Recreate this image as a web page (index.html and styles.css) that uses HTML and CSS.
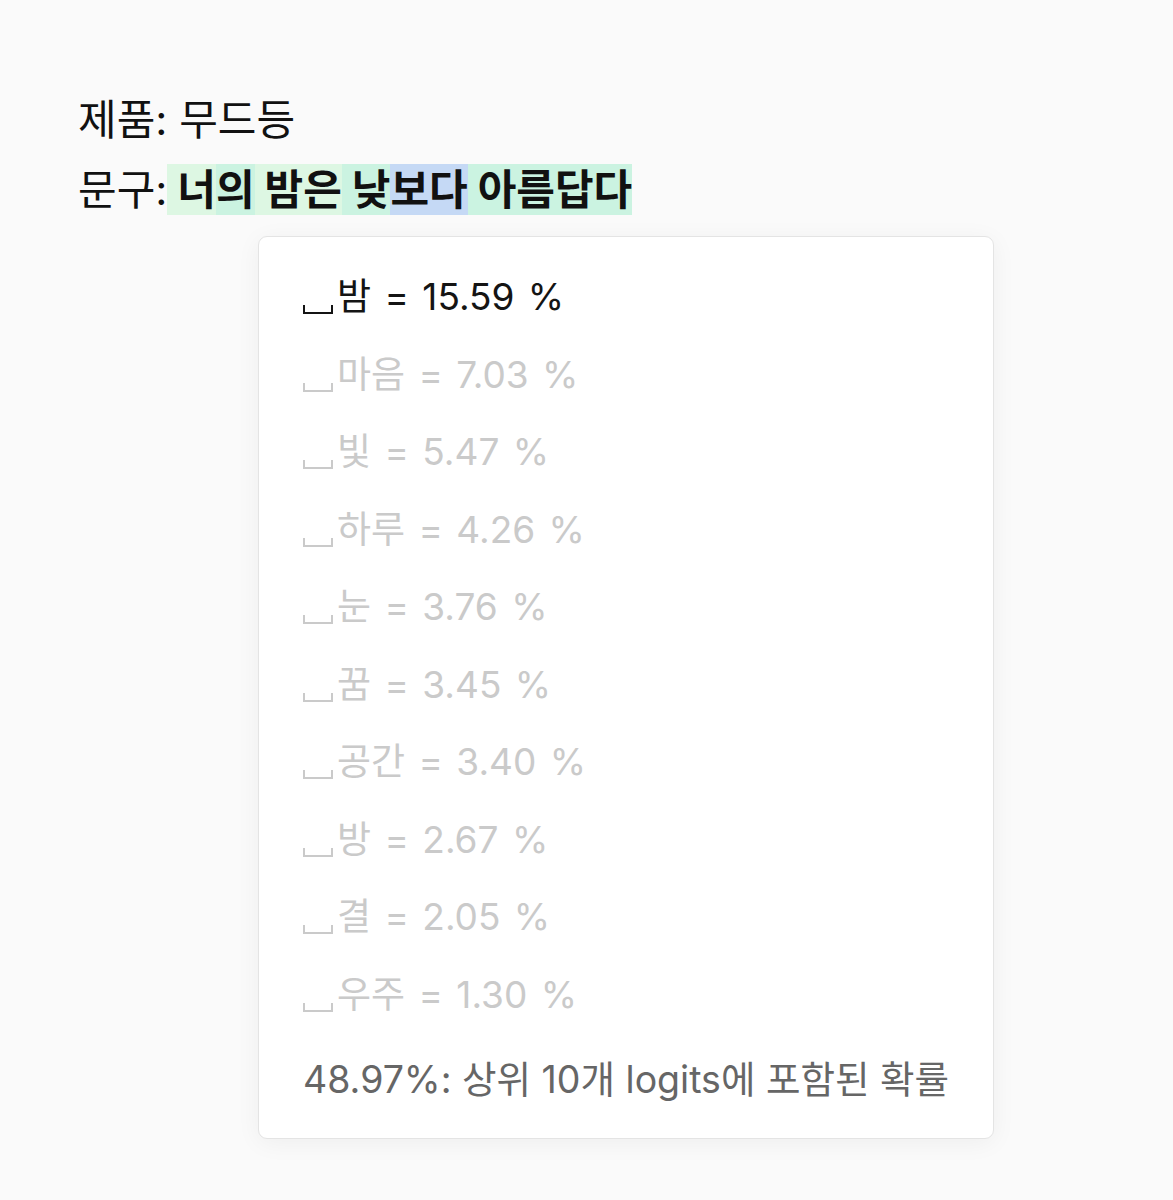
FILE: index.html
```html
<!DOCTYPE html>
<html lang="ko">
<head>
  <meta charset="UTF-8">
  <title>문구 확률</title>
  <meta name="viewport" content="width=device-width, initial-scale=1">
  <link rel="stylesheet" href="styles.css">
</head>
<body>
  <div class="page">
    <p class="line">제품: 무드등</p>
    <p class="line">문구:<span class="tok light"> 너</span><span class="tok teal">의</span><span class="tok light"> 밤은</span><span class="tok teal"> 낮</span><span class="tok blue">보다</span><span class="tok teal"> 아름답다</span></p>

    <div class="popup">
      <ul class="logits">
        <li class="top"><span class="sp" title="␣"></span>밤 = 15.59 %</li>
        <li><span class="sp" title="␣"></span>마음 = 7.03 %</li>
        <li><span class="sp" title="␣"></span>빛 = 5.47 %</li>
        <li><span class="sp" title="␣"></span>하루 = 4.26 %</li>
        <li><span class="sp" title="␣"></span>눈 = 3.76 %</li>
        <li><span class="sp" title="␣"></span>꿈 = 3.45 %</li>
        <li><span class="sp" title="␣"></span>공간 = 3.40 %</li>
        <li><span class="sp" title="␣"></span>방 = 2.67 %</li>
        <li><span class="sp" title="␣"></span>결 = 2.05 %</li>
        <li><span class="sp" title="␣"></span>우주 = 1.30 %</li>
      </ul>
      <p class="summary">48.97%: 상위 10개 logits에 포함된 확률</p>
    </div>
  </div>
</body>
</html>
```

FILE: styles.css
```css
body {
  margin: 0;
  background: #fafafa;
  color: #111;
  font-family: Inter, "Noto Sans CJK KR", sans-serif;
}
.page {
  padding: 85px 0 40px 78px;
}
.line {
  margin: 0;
  font-size: 42px;
  line-height: 70px;
}
.tok {
  font-weight: 700;
}
.light { background: #ddf7e3; }
.teal  { background: #cbf3e1; }
.blue  { background: #c5d9f5; }

.popup {
  box-sizing: border-box;
  width: 736px;
  margin: 11px 0 0 180px;
  padding: 21px 0 19px 44px;
  background: #fff;
  border: 1px solid #e4e4e4;
  border-radius: 9px;
  box-shadow: 0 4px 24px rgba(0,0,0,0.05);
}
.logits {
  list-style: none;
  margin: 0;
  padding: 0;
  font-size: 37px;
  line-height: 77.5px;
  word-spacing: 3px;
  color: #cacaca;
}
.logits .top {
  color: #141414;
}
/* open-box space marker */
.sp {
  display: inline-block;
  box-sizing: border-box;
  width: 30px;
  height: 9px;
  margin-right: 4px;
  vertical-align: -4px;
  border: 2.5px solid currentColor;
  border-top: none;
}
.summary {
  margin: 8px 0 0;
  font-size: 37.5px;
  line-height: 77.5px;
  color: #666;
}
```
